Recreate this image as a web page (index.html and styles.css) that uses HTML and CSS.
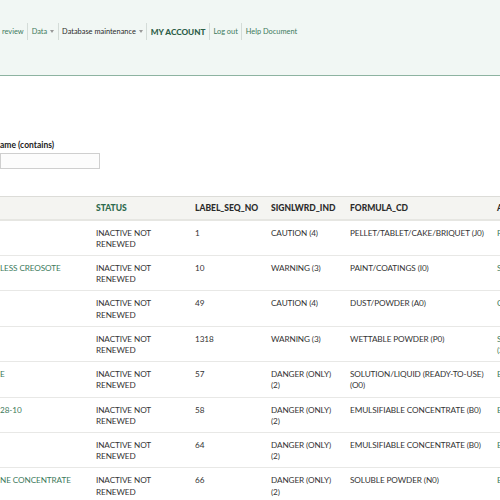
FILE: index.html
```html
<!DOCTYPE html>
<html lang="en">
<head>
<meta charset="UTF-8">
<title>Products</title>
<link rel="stylesheet" href="styles.css">
</head>
<body>

<div class="header">
  <ul class="nav">
    <li><a href="#">review</a></li>
    <li><a href="#">Data</a><span class="caret"></span></li>
    <li class="dark">Database maintenance<span class="caret"></span></li>
    <li class="account">MY ACCOUNT</li>
    <li><a href="#">Log out</a></li>
    <li><a href="#">Help Document</a></li>
  </ul>
</div>

<div class="filter">
  <label for="name">ame (contains)</label>
  <input type="text" id="name">
</div>

<table class="results">
  <colgroup>
    <col style="width:96px">
    <col style="width:99px">
    <col style="width:76px">
    <col style="width:79px">
    <col style="width:147px">
    <col style="width:80px">
  </colgroup>
  <thead>
    <tr>
      <th></th>
      <th class="sorted">STATUS</th>
      <th>LABEL_SEQ_NO</th>
      <th>SIGNLWRD_IND</th>
      <th>FORMULA_CD</th>
      <th>AGENCY</th>
    </tr>
  </thead>
  <tbody>
    <tr><td></td><td>INACTIVE NOT RENEWED</td><td>1</td><td>CAUTION (4)</td><td>PELLET/TABLET/CAKE/BRIQUET (J0)</td><td><a href="#">PESTICIDE</a></td></tr>
    <tr><td><a href="#">LESS CREOSOTE</a></td><td>INACTIVE NOT RENEWED</td><td>10</td><td>WARNING (3)</td><td>PAINT/COATINGS (I0)</td><td><a href="#">SAFETY</a></td></tr>
    <tr><td></td><td>INACTIVE NOT RENEWED</td><td>49</td><td>CAUTION (4)</td><td>DUST/POWDER (A0)</td><td><a href="#">COMMERCIAL</a></td></tr>
    <tr><td></td><td>INACTIVE NOT RENEWED</td><td>1318</td><td>WARNING (3)</td><td>WETTABLE POWDER (P0)</td><td><a href="#">SPECIAL LOCAL (24C)</a></td></tr>
    <tr><td><a href="#">E</a></td><td>INACTIVE NOT RENEWED</td><td>57</td><td>DANGER (ONLY) (2)</td><td>SOLUTION/LIQUID <span class="nw">(READY-TO-USE)</span> (O0)</td><td><a href="#">EPA</a></td></tr>
    <tr><td><a href="#">28-10</a></td><td>INACTIVE NOT RENEWED</td><td>58</td><td>DANGER (ONLY) (2)</td><td>EMULSIFIABLE CONCENTRATE (B0)</td><td><a href="#">EPA</a></td></tr>
    <tr><td></td><td>INACTIVE NOT RENEWED</td><td>64</td><td>DANGER (ONLY) (2)</td><td>EMULSIFIABLE CONCENTRATE (B0)</td><td><a href="#">EPA</a></td></tr>
    <tr><td><a href="#">NE CONCENTRATE</a></td><td>INACTIVE NOT RENEWED</td><td>66</td><td>DANGER (ONLY) (2)</td><td>SOLUBLE POWDER (N0)</td><td><a href="#">EPA</a></td></tr>
  </tbody>
</table>

</body>
</html>
```

FILE: styles.css
```css
* {
  box-sizing: border-box;
}

html, body {
  overflow: hidden;
}

body {
  margin: 0;
  font-family: Lato, "Open Sans", sans-serif;
  font-size: 8.2px;
  color: #333;
  background: #fff;
}

a {
  color: #3d7a5c;
  text-decoration: none;
}

.header {
  height: 76px;
  background: #f1f7f4;
  border-bottom: 1px solid #8db3a1;
  padding-top: 23px;
}

.nav {
  list-style: none;
  margin: 0;
  padding: 0 0 0 2px;
  display: flex;
  align-items: center;
}

.nav li {
  display: flex;
  align-items: center;
  height: 17px;
  padding: 0 3.5px;
  border-left: 1px solid #d4dcd8;
  font-size: 7.4px;
}

.nav li:first-child {
  border-left: none;
  padding-left: 0;
}

.nav .dark {
  color: #2b2b2b;
}

.nav .account {
  color: #2d5e48;
  font-weight: 900;
  font-size: 8.2px;
}

.caret {
  display: inline-block;
  margin-left: 3px;
  border-left: 2.5px solid transparent;
  border-right: 2.5px solid transparent;
  border-top: 3px solid #999;
}

.filter {
  padding-top: 63px;
  height: 120px;
}

.filter label {
  display: block;
  font-weight: 700;
  font-size: 8.5px;
  color: #222;
  line-height: 12px;
}

.filter input {
  display: block;
  margin-top: 2px;
  width: 100px;
  height: 16px;
  border: 1px solid #cfcfcf;
  background: #fcfcfc;
}

.results {
  table-layout: fixed;
  width: 577px;
  border-collapse: collapse;
}

.results th {
  text-align: left;
  font-size: 8.5px;
  font-weight: 900;
  color: #2b2b2b;
  background: #f4f4f1;
  border-top: 1px solid #dcdcd8;
  border-bottom: 2px solid #e6e6e2;
  height: 23px;
  padding: 0 10px 0 0;
}

.results th.sorted {
  color: #2d6a4e;
}

.results td {
  vertical-align: top;
  line-height: 11.2px;
  letter-spacing: -0.1px;
  padding: 7px 10px 5px 0;
  border-bottom: 1px solid #e8e8e6;
}

.results td:first-child {
  white-space: nowrap;
  overflow: hidden;
}

.nw {
  white-space: nowrap;
}
```
